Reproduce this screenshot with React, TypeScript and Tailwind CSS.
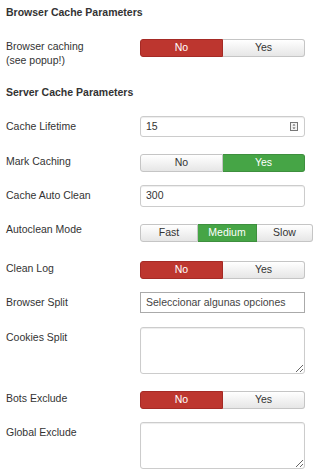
import type { ReactNode } from "react";

const font = { fontFamily: '"Liberation Sans", Arial, sans-serif' };

function Toggle({ value, options, widths }: { value: string; options: string[]; widths: string[] }) {
  return (
    <div className="flex h-[18px] text-[10.5px]">
      {options.map((opt, i) => {
        const active = opt === value;
        const first = i === 0;
        const last = i === options.length - 1;
        let cls = "bg-gradient-to-b from-white to-[#e6e6e6] border-[#c5c5c5] text-[#333]";
        if (active && opt === "No") cls = "bg-[#bd362f] border-[#a52a25] text-white";
        else if (active) cls = "bg-[#46a546] border-[#3e8f3e] text-white";
        return (
          <div
            key={opt}
            className={`${widths[i]} flex items-center justify-center border ${cls} ${first ? "rounded-l-[3px]" : "border-l-0"} ${last ? "rounded-r-[3px]" : ""}`}
          >
            {opt}
          </div>
        );
      })}
    </div>
  );
}

function Row({
  label,
  children,
  className = "",
  labelClass = "pt-[3px]",
}: {
  label: ReactNode;
  children: ReactNode;
  className?: string;
  labelClass?: string;
}) {
  return (
    <div className={`flex ${className}`}>
      <div className={`w-[140px] shrink-0 pl-[6px] leading-[14px] text-[10.5px] text-[#333] ${labelClass}`}>{label}</div>
      <div>{children}</div>
    </div>
  );
}

const box = "w-[165px] border border-[#ccc] rounded-[3px] bg-white shadow-[inset_0_1px_1px_rgba(0,0,0,0.075)]";

export default function App() {
  return (
    <div className="w-[322px] h-[476px] bg-white text-[#333]" style={font}>
      <div className="pl-[6px] pt-[5px] h-[39px] text-[10.5px] font-bold leading-[14px]">Browser Cache Parameters</div>
      <Row label={<>Browser caching<br />(see popup!)</>} className="h-[46px]" labelClass="pt-0">
        <Toggle value="No" options={["No", "Yes"]} widths={["w-[83px]", "w-[82px]"]} />
      </Row>
      <div className="pl-[6px] h-[31px] text-[10.5px] font-bold leading-[14px]">Server Cache Parameters</div>
      <Row label="Cache Lifetime" className="h-[38px]">
        <div className={`${box} h-[21px] flex items-center justify-between pl-[5px] pr-[6px] text-[10.5px]`}>
          <span>15</span>
          <svg width="8" height="9" viewBox="0 0 8 9">
            <rect x="0.5" y="0.5" width="7" height="8" fill="#f4f4f4" stroke="#777" />
            <path d="M2.5 3.5 L4 2 L5.5 3.5 Z M2.5 5.5 L4 7 L5.5 5.5 Z" fill="#555" />
          </svg>
        </div>
      </Row>
      <Row label="Mark Caching" className="h-[31px]" labelClass="pt-0">
        <Toggle value="Yes" options={["No", "Yes"]} widths={["w-[83px]", "w-[82px]"]} />
      </Row>
      <Row label="Cache Auto Clean" className="h-[39px]">
        <div className={`${box} h-[22px] flex items-center pl-[5px] text-[10.5px]`}>300</div>
      </Row>
      <Row label="Autoclean Mode" className="h-[37px]" labelClass="-mt-[2px]">
        <div className="h-[19px] flex">
          <Toggle value="Medium" options={["Fast", "Medium", "Slow"]} widths={["w-[58px]", "w-[59px]", "w-[56px]"]} />
        </div>
      </Row>
      <Row label="Clean Log" className="h-[31px]" labelClass="pt-0">
        <Toggle value="No" options={["No", "Yes"]} widths={["w-[83px]", "w-[82px]"]} />
      </Row>
      <Row label="Browser Split" className="h-[35px]">
        <div className="w-[165px] h-[21px] border border-[#aaa] bg-white flex items-center pl-[5px] text-[10.5px] text-[#444]">
          Seleccionar algunas opciones
        </div>
      </Row>
      <Row label="Cookies Split" className="h-[64px]">
        <textarea className={`${box} h-[47px] block`} />
      </Row>
      <Row label="Bots Exclude" className="h-[31px]" labelClass="pt-0">
        <Toggle value="No" options={["No", "Yes"]} widths={["w-[83px]", "w-[82px]"]} />
      </Row>
      <Row label="Global Exclude">
        <textarea className={`${box} h-[47px] block`} />
      </Row>
    </div>
  );
}
